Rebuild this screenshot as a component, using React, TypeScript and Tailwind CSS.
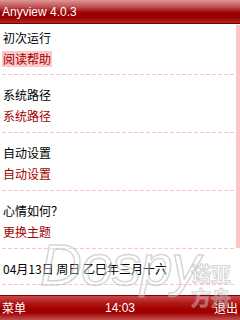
import React from 'react'

const cjk = { fontFamily: '"Noto Sans CJK SC", "Noto Sans", sans-serif' }

function Dashes() {
  return (
    <div className="ml-[2px] h-px bg-[repeating-linear-gradient(to_right,#ffc4c4_0_4px,transparent_4px_6px)]" />
  )
}

interface SectionProps {
  title: string
  action: string
  selected?: boolean
  first?: boolean
}

function Section({ title, action, selected, first }: SectionProps) {
  return (
    <div>
      <div className={first ? 'pt-[3px] pb-[5px]' : 'pt-[9px] pb-[6px]'}>
        <div className="h-[21px] flex items-center pl-[3px] text-[12px] text-black">{title}</div>
        <div className="h-[21px] flex items-center pl-[2px] text-[12px] text-[#a00000]">
          <span className={selected ? 'h-[16px] leading-[16px] px-px bg-[#ffc8c8]' : 'px-px'}>{action}</span>
        </div>
      </div>
      <Dashes />
    </div>
  )
}

export default function App() {
  const sections = [
    { title: '初次运行', action: '阅读帮助', selected: true },
    { title: '系统路径', action: '系统路径' },
    { title: '自动设置', action: '自动设置' },
    { title: '心情如何？', action: '更换主题' },
  ]

  return (
    <div className="relative w-[240px] h-[320px] overflow-hidden bg-white flex flex-col" style={cjk}>
      {/* Title bar */}
      <div className="h-[24px] shrink-0 border-b border-[#7a0000] bg-[linear-gradient(to_bottom,#dc9898_0%,#c05050_30%,#9c0000_55%,#980000_75%,#b02828_100%)] flex items-center pl-[2px]">
        <span className="text-white text-[12px] leading-none" style={{ fontFamily: '"Liberation Sans", Arial, sans-serif' }}>
          Anyview 4.0.3
        </span>
      </div>

      {/* Body */}
      <div className="flex-1 flex">
        <div className="flex-1 pr-[2px]">
          {sections.map((s, i) => (
            <Section key={i} {...s} first={i === 0} />
          ))}
          <div className="pt-[9px] pb-[5px]">
            <div className="h-[21px] flex items-center pl-[3px] text-[12px] text-black">04月13日 周日 乙巳年三月十六</div>
          </div>
          <Dashes />
        </div>
        <div className="w-[4px] shrink-0">
          <div className="mt-px h-[223px] bg-[#ffc4c4]" />
        </div>
      </div>

      {/* Soft keys */}
      <div className="h-[25px] shrink-0 border-t border-[#7a0000] bg-[linear-gradient(to_bottom,#c84848_0%,#b01818_30%,#a00000_55%,#a00000_70%,#c05050_100%)] flex items-center justify-between px-[2px] text-white text-[12px]">
        <span>菜单</span>
        <span style={{ fontFamily: '"Liberation Sans", Arial, sans-serif' }}>14:03</span>
        <span>退出</span>
      </div>

      {/* Dospy watermark */}
      <div
        className="absolute left-[40px] top-[236px] text-[58px] italic leading-none tracking-[-1px] text-white/40 opacity-80 [-webkit-text-stroke:1.5px_rgba(170,170,170,0.6)] pointer-events-none"
        style={{ fontFamily: '"Liberation Sans", Arial, sans-serif' }}
      >
        Dospy
      </div>
      <div className="absolute left-[191px] top-[262px] flex flex-col text-[20px] leading-[24px] font-bold text-white/30 [-webkit-text-stroke:1px_rgba(170,170,170,0.55)] pointer-events-none">
        <span>诺亚</span>
        <span>方舟</span>
      </div>
    </div>
  )
}
